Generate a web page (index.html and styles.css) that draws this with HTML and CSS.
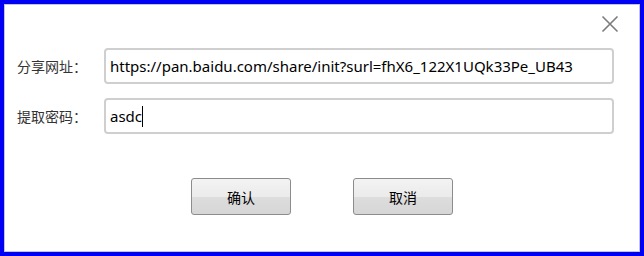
FILE: index.html
```html
<!DOCTYPE html>
<html lang="zh">
<head>
<meta charset="utf-8">
<link rel="stylesheet" href="styles.css">
</head>
<body>
<div class="frame">
  <div class="inner">
    <div class="header">
      <svg class="close" width="18" height="18" viewBox="0 0 18 18"><path d="M1.5 1.5 L16.5 16.5 M16.5 1.5 L1.5 16.5" stroke="#7b7b7b" stroke-width="1.6" fill="none"/></svg>
    </div>
    <div class="form">
      <div class="row">
        <div class="label">分享网址：</div>
        <div class="field">https://pan.baidu.com/share/init?surl=fhX6_122X1UQk33Pe_UB43</div>
      </div>
      <div class="row">
        <div class="label">提取密码：</div>
        <div class="field">asdc<span class="caret"></span></div>
      </div>
    </div>
    <div class="actions">
      <div class="btn">确认</div>
      <div class="btn">取消</div>
    </div>
  </div>
</div>
</body>
</html>
```
FILE: styles.css
```css
html, body {
  margin: 0;
  padding: 0;
  background: #fff;
}
.frame {
  width: 644px;
  height: 256px;
  box-sizing: border-box;
  border: 4px solid #0000f5;
  font-family: "Noto Sans", "Noto Sans CJK SC", sans-serif;
}
.inner {
  height: 100%;
  box-sizing: border-box;
  border: 1px solid #c4c4d4;
  background: #fff;
}
.header {
  height: 43px;
  display: flex;
  justify-content: flex-end;
  padding: 10px 20px 0 0;
  box-sizing: border-box;
}
.close {
  display: block;
}
.form {
  display: flex;
  flex-direction: column;
  gap: 14px;
}
.row {
  display: flex;
  align-items: center;
  padding-left: 12px;
}
.label {
  width: 87px;
  font-family: "Noto Sans CJK SC", sans-serif;
  font-size: 14px;
  color: #333;
}
.field {
  width: 510px;
  height: 36px;
  box-sizing: border-box;
  border: 2px solid #cfcfcf;
  border-radius: 4px;
  padding: 0 0 0 4px;
  display: flex;
  align-items: center;
  font-size: 15px;
  color: #000;
}
.caret {
  display: inline-block;
  width: 1px;
  height: 21px;
  background: #000;
}
.actions {
  display: flex;
  justify-content: center;
  gap: 62px;
  margin-top: 44px;
}
.btn {
  width: 100px;
  height: 37px;
  box-sizing: border-box;
  border: 1px solid #8c8c8c;
  border-radius: 3px;
  background: linear-gradient(#f3f3f3 0%, #ebebeb 50%, #dddddd 51%, #d6d6d6 100%);
  display: flex;
  align-items: center;
  justify-content: center;
  font-family: "Noto Sans CJK SC", sans-serif;
  font-size: 14px;
  color: #000;
}
```
